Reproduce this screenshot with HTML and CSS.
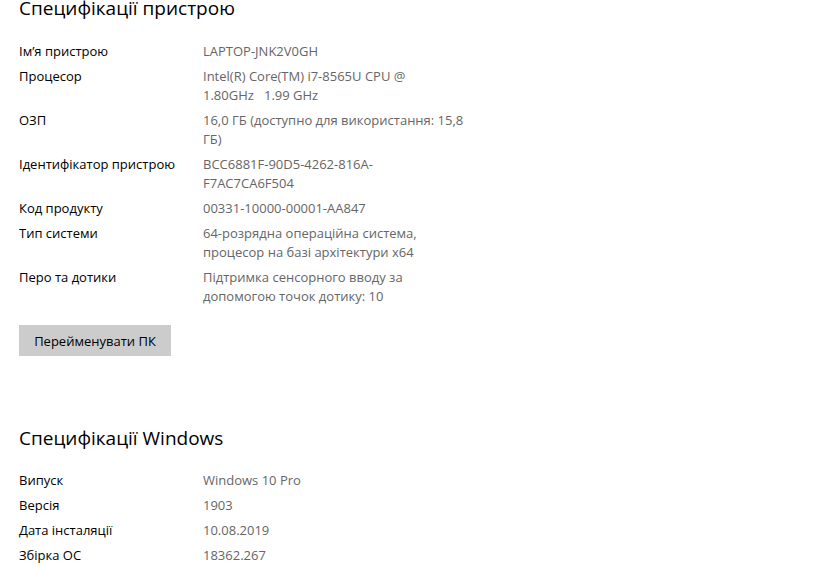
FILE: index.html
```html
<!DOCTYPE html>
<html lang="uk">
<head>
<meta charset="utf-8">
<title>Про систему</title>
<link rel="stylesheet" href="styles.css">
</head>
<body>
<main class="page">
  <section class="specs specs-device">
    <h2 class="specs-title">Специфікації пристрою</h2>
    <dl class="specs-list">
      <dt>Ім’я пристрою</dt><dd>LAPTOP-JNK2V0GH</dd>
      <dt>Процесор</dt><dd>Intel(R) Core(TM) i7-8565U CPU @<br>1.80GHz&nbsp;&nbsp; 1.99 GHz</dd>
      <dt>ОЗП</dt><dd>16,0 ГБ (доступно для використання: 15,8<br>ГБ)</dd>
      <dt>Ідентифікатор пристрою</dt><dd>BCC6881F-90D5-4262-816A-<br>F7AC7CA6F504</dd>
      <dt>Код продукту</dt><dd>00331-10000-00001-AA847</dd>
      <dt>Тип системи</dt><dd>64-розрядна операційна система,<br>процесор на базі архітектури x64</dd>
      <dt>Перо та дотики</dt><dd>Підтримка сенсорного вводу за<br>допомогою точок дотику: 10</dd>
    </dl>
    <button class="rename-btn" type="button">Перейменувати ПК</button>
  </section>
  <section class="specs specs-windows">
    <h2 class="specs-title">Специфікації Windows</h2>
    <dl class="specs-list">
      <dt>Випуск</dt><dd>Windows 10 Pro</dd>
      <dt>Версія</dt><dd>1903</dd>
      <dt>Дата інсталяції</dt><dd>10.08.2019</dd>
      <dt>Збірка ОС</dt><dd>18362.267</dd>
    </dl>
  </section>
</main>
</body>
</html>
```
FILE: styles.css
```css
html, body {
  margin: 0;
  padding: 0;
  background: #ffffff;
}
body {
  font-family: "Open Sans", "Noto Sans", "Liberation Sans", sans-serif;
  color: #000000;
  overflow: hidden;
}
.page {
  padding: 0 0 0 19px;
}
.specs-title {
  margin: 0;
  font-weight: 400;
  font-size: 19px;
  line-height: 28px;
  color: #000;
}
.specs-device .specs-title {
  margin-top: -6px;
}
.specs-list {
  display: grid;
  grid-template-columns: 184px 280px;
  row-gap: 6px;
  margin: 0;
  font-size: 13px;
  line-height: 19px;
}
.specs-device .specs-list {
  margin-top: 20px;
}
.specs-list dt {
  margin: 0;
  color: #000;
}
.specs-list dd {
  margin: 0;
  color: #666666;
}
.rename-btn {
  display: block;
  margin-top: 19px;
  width: 152px;
  height: 31px;
  padding: 0;
  border: 0;
  background: #cccccc;
  font-family: inherit;
  font-size: 13px;
  color: #000;
}
.specs-windows {
  margin-top: 68px;
}
.specs-windows .specs-list {
  margin-top: 19px;
}
```
